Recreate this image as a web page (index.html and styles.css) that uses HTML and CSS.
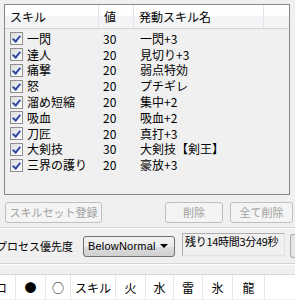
FILE: index.html
```html
<!DOCTYPE html>
<html lang="ja">
<head>
<meta charset="utf-8">
<link rel="stylesheet" href="styles.css">
</head>
<body>
<div class="list">
  <div class="hdr">
    <div class="hc c1">スキル</div>
    <div class="hc c2">値</div>
    <div class="hc c3">発動スキル名</div>
    <div class="hc c4"></div>
  </div>
  <div class="rows">
    <div class="row"><span class="cb"></span><span class="c1t">一閃</span><span class="c2">30</span><span class="c3">一閃+3</span></div>
    <div class="row"><span class="cb"></span><span class="c1t">達人</span><span class="c2">20</span><span class="c3">見切り+3</span></div>
    <div class="row"><span class="cb"></span><span class="c1t">痛撃</span><span class="c2">20</span><span class="c3">弱点特効</span></div>
    <div class="row"><span class="cb"></span><span class="c1t">怒</span><span class="c2">20</span><span class="c3">プチギレ</span></div>
    <div class="row"><span class="cb"></span><span class="c1t">溜め短縮</span><span class="c2">20</span><span class="c3">集中+2</span></div>
    <div class="row"><span class="cb"></span><span class="c1t">吸血</span><span class="c2">20</span><span class="c3">吸血+2</span></div>
    <div class="row"><span class="cb"></span><span class="c1t">刀匠</span><span class="c2">20</span><span class="c3">真打+3</span></div>
    <div class="row"><span class="cb"></span><span class="c1t">大剣技</span><span class="c2">30</span><span class="c3">大剣技【剣王】</span></div>
    <div class="row"><span class="cb"></span><span class="c1t">三界の護り</span><span class="c2">20</span><span class="c3">豪放+3</span></div>
  </div>
</div>
<div class="btnrow">
  <button class="btn b1" disabled>スキルセット登録</button>
  <div class="spacer"></div>
  <button class="btn b2" disabled>削除</button>
  <button class="btn b3" disabled>全て削除</button>
</div>
<div class="sep"></div>
<div class="prow">
  <span class="plabel">プロセス優先度</span>
  <div class="combo"><span class="ctext">BelowNormal</span><span class="arrow"></span></div>
  <div class="remain">残り14時間3分49秒</div>
  <div class="sidebtn"></div>
</div>
<div class="sep sep2"></div>
<div class="bar">
  <div class="cell w1">ロ</div>
  <div class="cell w2">●</div>
  <div class="cell w3">○</div>
  <div class="cell w4">スキル</div>
  <div class="cell w5">火</div>
  <div class="cell w6">水</div>
  <div class="cell w7">雷</div>
  <div class="cell w8">氷</div>
  <div class="cell w9">龍</div>
  <div class="cell w10"></div>
</div>
</body>
</html>
```
FILE: styles.css
```css
html, body {
  margin: 0;
  padding: 0;
  background: #f0f0f0;
  width: 295px;
  height: 300px;
  overflow: hidden;
  font-family: "Noto Sans CJK JP", "DejaVu Sans", sans-serif;
  font-size: 12px;
  color: #000;
}

.list {
  margin: 4px 0 0 4px;
  width: 284px;
  height: 189px;
  border: 1px solid #828790;
  background: #f0f0f0;
  box-sizing: content-box;
}

.hdr {
  display: flex;
  height: 24px;
  background: linear-gradient(#ffffff 0%, #ffffff 45%, #f3f4f6 50%, #f2f3f5 100%);
  border-bottom: 1px solid #d5d5d5;
  box-sizing: border-box;
}
.hc {
  height: 100%;
  display: flex;
  align-items: center;
  border-right: 1px solid #e2e3ea;
  box-sizing: border-box;
  line-height: 1;
}
.hc.c1 { width: 94px; padding-left: 5px; }
.hc.c2 { width: 35px; padding-left: 5px; }
.hc.c3 { width: 130px; padding-left: 5px; }
.hc.c4 { flex: 1; border-right: none; }

.rows {
  padding-top: 2px;
}
.row {
  display: flex;
  align-items: center;
  height: 15.8px;
  line-height: 1;
}
.cb {
  width: 13px;
  height: 13px;
  margin-left: 5px;
  box-sizing: border-box;
  border: 1px solid #8f8f8f;
  background: linear-gradient(135deg, #dcdcdc, #ffffff);
  position: relative;
  flex: none;
}
.cb::after {
  content: "";
  position: absolute;
  left: 3px;
  top: 1px;
  width: 3px;
  height: 6px;
  border: solid #2f4aa8;
  border-width: 0 2px 2px 0;
  transform: rotate(40deg);
}
.c1t { width: 76px; padding-left: 4px; box-sizing: border-box; flex: none; }
.row .c2 { width: 36px; padding-left: 4px; box-sizing: border-box; flex: none; }
.row .c3 { padding-left: 5px; }

.btnrow {
  display: flex;
  margin-top: 7px;
  height: 21px;
  padding-left: 5px;
}
.spacer { flex: 1; }
.btn {
  font-family: inherit;
  font-size: 11px;
  color: #a0a0a0;
  background: #f4f4f4;
  border: 1px solid #bfbfbf;
  border-radius: 3px;
  height: 21px;
  padding: 0;
  line-height: 1;
  white-space: nowrap;
}
.b1 { width: 97px; }
.b2 { width: 58px; margin-right: 7px; }
.b3 { width: 63px; margin-right: 2px; }

.sep {
  margin-top: 4px;
  height: 1px;
  background: #d5d5d5;
  border-bottom: 1px solid #ffffff;
}

.prow {
  display: flex;
  align-items: center;
  height: 22px;
  margin-top: 6px;
}
.plabel {
  width: 78px;
  margin-left: -4px;
  white-space: nowrap;
  flex: none;
  font-size: 11px;
}
.combo {
  width: 92px;
  height: 21px;
  box-sizing: border-box;
  border: 1px solid #707070;
  border-radius: 3px;
  background: linear-gradient(#f2f2f2 0%, #ebebeb 50%, #dddddd 51%, #cfcfcf 100%);
  display: flex;
  align-items: center;
  padding-left: 4px;
  margin-left: 9px;
  flex: none;
}
.ctext {
  flex: 1;
  font-family: "Liberation Sans", "DejaVu Sans", sans-serif;
  font-size: 11px;
  letter-spacing: 0.2px;
}
.arrow {
  width: 0;
  height: 0;
  border-left: 4px solid transparent;
  border-right: 4px solid transparent;
  border-top: 4px solid #000;
  margin-right: 6px;
}
.remain {
  margin-left: 7px;
  width: 103px;
  height: 23px;
  box-sizing: border-box;
  border: 1px solid #adadad;
  border-right-color: #e3e3e3;
  border-bottom-color: #e3e3e3;
  background: #f0f0f0;
  padding: 2px 0 0 2px;
  line-height: 1;
  white-space: nowrap;
  font-size: 11px;
  letter-spacing: -0.3px;
  flex: none;
  align-self: flex-start;
  margin-top: -2px;
}
.sidebtn {
  margin-left: 5px;
  width: 10px;
  height: 22px;
  border: 1px solid #adadad;
  border-right: none;
  border-radius: 3px 0 0 3px;
  background: #e6e6e6;
  flex: none;
}

.sep2 { margin-top: 6px; }

.bar {
  display: flex;
  margin-top: 9px;
  height: 24px;
  background: #fff;
  border-top: 1px solid #d9d9d9;
}
.cell {
  height: 100%;
  display: flex;
  align-items: center;
  justify-content: center;
  border-right: 1px solid #e5e5e5;
  box-sizing: border-box;
  flex: none;
}
.w1 { justify-content: flex-start; margin-left: -5px; width: 21px; }
.w2 { width: 30px; }
.w3 { width: 25px; }
.w4 { width: 45px; }
.w5 { width: 30px; }
.w6 { width: 28px; }
.w7 { width: 29px; }
.w8 { width: 30px; }
.w9 { width: 32px; }
.w10 { flex: 1; border-right: none; }
```
